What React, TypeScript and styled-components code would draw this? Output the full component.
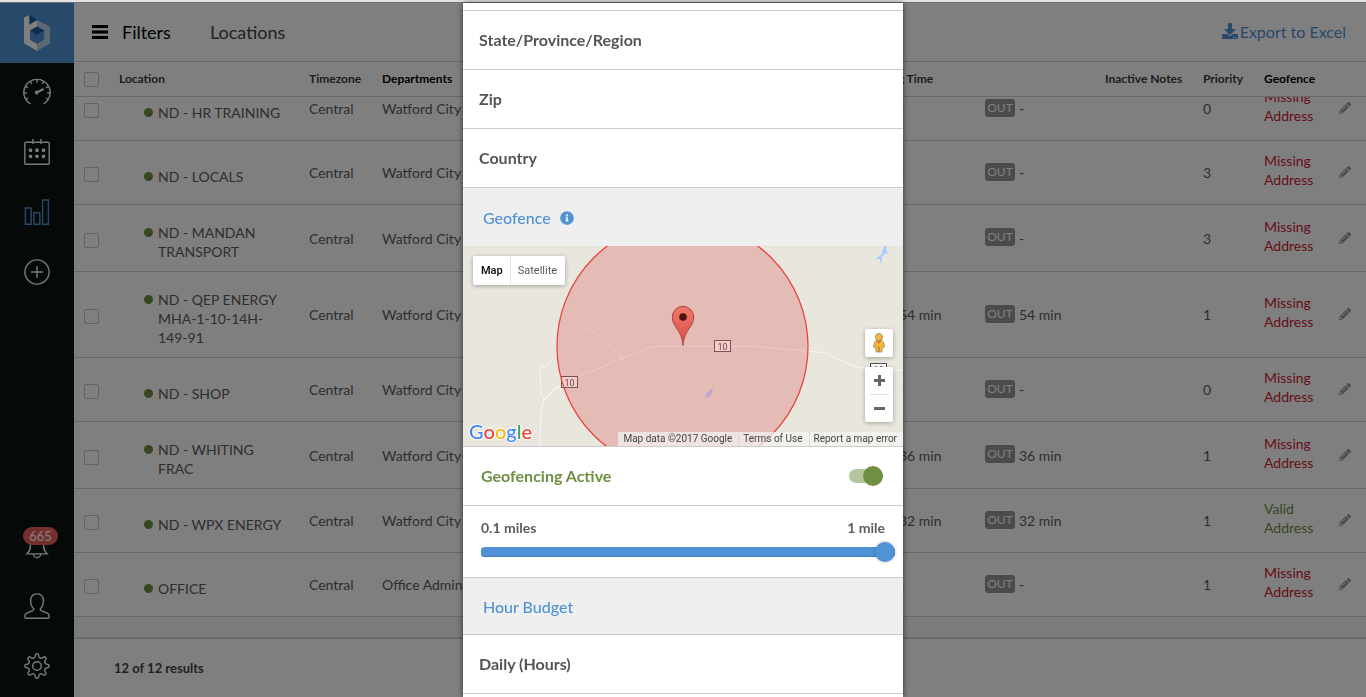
import React, { useLayoutEffect, useRef, useState } from 'react';
import styled, { createGlobalStyle } from 'styled-components';
import { FaDownload, FaInfoCircle, FaPencilAlt } from 'react-icons/fa';

const GlobalStyle = createGlobalStyle`
  *, *::before, *::after { box-sizing: border-box; }
  body { margin: 0; background: #fff; font-family: Lato, "Liberation Sans", sans-serif; color: #5c5c5c; }
  button, input { font: inherit; color: inherit; }
  button { padding: 0; border: 0; background: none; cursor: pointer; }
  a { text-decoration: none; }
`;

/* ---------- shell ---------- */

const Shell = styled.div`
  display: flex;
  flex-direction: column;
  height: 100vh;
  overflow: hidden;
`;

const TopStrip = styled.div`
  flex: none;
  height: 3px;
  background: #e2e2e4;
  border-bottom: 1px solid #737373;
`;

const Workspace = styled.div`
  flex: 1;
  min-height: 0;
  display: flex;
`;

const Sidebar = styled.nav`
  flex: none;
  width: 74px;
  display: flex;
  flex-direction: column;
  background: #0a1512;
`;

const LogoLink = styled.a`
  display: flex;
  justify-content: center;
  align-items: center;
  height: 60px;
  background: #4f92d5;
`;

const NavButton = styled.button<{ $active?: boolean }>`
  display: flex;
  justify-content: center;
  align-items: flex-start;
  height: 60px;
  padding-top: 16px;
  position: relative;
  color: ${p => (p.$active ? '#4f92d5' : '#f4f4f4')};
  svg { fill: none; stroke: currentColor; stroke-width: 1.4; }
`;

const NavSpacer = styled.div`
  flex: 1;
`;

const CountBadge = styled.span`
  position: absolute;
  top: 10px;
  left: 23px;
  width: 35px;
  height: 18px;
  border-radius: 9px;
  background: #ea605c;
  color: #fff;
  font-size: 13px;
  line-height: 18px;
  text-align: center;
`;

const Main = styled.main`
  flex: 1;
  min-width: 0;
  display: flex;
  flex-direction: column;
`;

const PageHeader = styled.header`
  flex: none;
  display: flex;
  align-items: center;
  height: 59px;
  padding: 0 20px 0 18px;
  border-bottom: 1px solid #d0d0d0;
  font-size: 18px;
`;

const FilterButton = styled.button`
  display: flex;
  align-items: center;
  gap: 14px;
  color: #000;
  margin-right: 39px;
`;

const PageTitle = styled.h1`
  flex: 1;
  margin: 0;
  font-size: 18px;
  font-weight: 400;
  color: #444;
`;

const ExportLink = styled.a`
  display: flex;
  align-items: center;
  gap: 2px;
  padding-bottom: 2px;
  font-size: 16px;
  color: #4f92d5;
`;

/* ---------- table ---------- */

const TableScroller = styled.div`
  flex: 1;
  min-height: 0;
  overflow-y: auto;
  scrollbar-width: none;
  background: #f6f6f6;
  padding-bottom: 20px;
`;

const Table = styled.table`
  width: 100%;
  table-layout: fixed;
  border-collapse: separate;
  border-spacing: 0;
  background: #fff;
  font-size: 14px;
  line-height: 19px;
`;

const Col = styled.col<{ $w?: number }>`
  width: ${p => (p.$w ? `${p.$w}px` : 'auto')};
`;

const HeadCell = styled.th<{ $strong?: boolean; $check?: boolean }>`
  position: sticky;
  top: 0;
  z-index: 1;
  height: 35px;
  padding: ${p => (p.$check ? '0 0 0 10px' : '0 0 2px')};
  background: #fff;
  border-bottom: 1px solid #d0d0d0;
  text-align: left;
  white-space: nowrap;
  font-size: 12px;
  font-weight: 700;
  color: ${p => (p.$strong ? '#000' : '#3a3a3a')};
`;

const Cell = styled.td`
  padding: 0;
  border-bottom: 1px solid #d0d0d0;
  white-space: nowrap;
`;

const CheckCell = styled(Cell)`
  padding: 4px 0 0 10px;
`;

const LocationCell = styled(Cell)`
  padding: 18px 25px 10px 25px;
  white-space: normal;
`;

const TimeCell = styled(Cell)`
  padding-left: 34px;
`;

const GeofenceCell = styled(Cell)<{ $valid: boolean }>`
  padding: 10px 15px 15px 0;
  white-space: normal;
  color: ${p => (p.$valid ? '#6f8f42' : '#cc2233')};
`;

const LocationName = styled.div`
  display: flex;
  align-items: flex-start;
  gap: 5px;
`;

const StatusDot = styled.span`
  flex: none;
  width: 9px;
  height: 9px;
  margin-top: 5px;
  border-radius: 50%;
  background: #6f8f42;
`;

const Checkbox = styled.input`
  appearance: none;
  display: block;
  width: 15px;
  height: 15px;
  margin: 0;
  border: 1px solid #c4c4c4;
  border-radius: 2px;
  background: transparent;
`;

const Timing = styled.div`
  display: flex;
  align-items: center;
  gap: 4px;
`;

const Tag = styled.span`
  width: 30px;
  height: 18px;
  margin-bottom: 2px;
  border-radius: 3px;
  background: #969696;
  color: #fff;
  font-size: 12px;
  line-height: 18px;
  text-align: center;
`;

const EditButton = styled.button`
  display: block;
  color: #999;
`;

const ResultsBar = styled.footer`
  flex: none;
  display: flex;
  align-items: center;
  height: 60px;
  padding-left: 40px;
  border-top: 2px solid #d8d8d8;
  background: #fff;
  font-size: 13px;
  font-weight: 700;
  color: #444;
`;

/* ---------- dialog ---------- */

const Backdrop = styled.div`
  position: fixed;
  inset: 3px 0 0;
  z-index: 10;
  display: flex;
  justify-content: center;
  background: rgba(0, 0, 0, 0.5);
`;

const Dialog = styled.form`
  width: 440px;
  padding-top: 7px;
  overflow: hidden;
  background: #fff;
  box-shadow: 0 0 6px rgba(0, 0, 0, 0.6);
`;

const Fields = styled.div`
  border-top: 1px solid #ccc;
`;

const Field = styled.div`
  display: flex;
  align-items: center;
  gap: 16px;
  height: 59px;
  padding: 0 16px 2px;
  border-bottom: 1px solid #ccc;
  font-size: 16px;
  font-weight: 700;
  color: #555;
`;

const FieldInput = styled.input`
  flex: 1;
  min-width: 0;
  border: 0;
  outline: 0;
  background: transparent;
`;

const SectionTitle = styled.h2<{ $ruled?: boolean }>`
  display: flex;
  align-items: center;
  gap: 9px;
  height: ${p => (p.$ruled ? 57 : 58)}px;
  margin: 0;
  padding: 0 20px;
  border-bottom: ${p => (p.$ruled ? '1px solid #ccc' : '0')};
  background: #efefef;
  color: #4f92d5;
  font-size: 16px;
  font-weight: 500;
  svg { margin-top: 2px; }
`;

const ToggleRow = styled(Field)`
  justify-content: space-between;
  padding: 0 20px 0 18px;
  color: #6f8f42;
  label { padding-bottom: 2px; }
`;

const Toggle = styled.input`
  appearance: none;
  display: flex;
  align-items: center;
  width: 34px;
  height: 14px;
  margin: 0;
  border-radius: 7px;
  background: #b5c69c;
  &::before {
    content: '';
    width: 20px;
    height: 20px;
    border-radius: 50%;
    background: #8f8f8f;
  }
  &:checked::before {
    margin-left: auto;
    background: #6f8f42;
  }
`;

const RadiusRow = styled.div`
  height: 72px;
  padding: 13px 8px 0 18px;
  border-bottom: 1px solid #ccc;
  font-size: 14px;
  line-height: 18px;
  font-weight: 700;
`;

const RadiusLabels = styled.div`
  display: flex;
  justify-content: space-between;
  padding-right: 10px;
`;

const RadiusSlider = styled.input`
  appearance: none;
  display: block;
  width: 100%;
  height: 20px;
  margin: 5px 0 0;
  background: transparent;
  &::-webkit-slider-runnable-track {
    height: 10px;
    border-radius: 4px;
    background: #4f92d5;
    box-shadow: inset 0 -1px 0 #3d7ab8;
  }
  &::-webkit-slider-thumb {
    appearance: none;
    width: 20px;
    height: 20px;
    margin-top: -5px;
    border-radius: 50%;
    background: #4f92d5;
    box-shadow: 0 0 3px rgba(0, 0, 0, 0.3);
  }
`;

/* ---------- map ---------- */

const MapFrame = styled.div`
  position: relative;
  height: 201px;
  border-bottom: 1px solid #ccc;
  background: #e8e6dd;
  font-family: Roboto, "Liberation Sans", sans-serif;
  overflow: hidden;
`;

const MapDrawing = styled.svg`
  display: block;
  width: 100%;
  height: 200px;
`;

const MapTypes = styled.div`
  position: absolute;
  top: 10px;
  left: 10px;
  display: flex;
  height: 29px;
  border-radius: 2px;
  background: #fff;
  box-shadow: 0 1px 4px rgba(0, 0, 0, 0.3);
  font-size: 11px;
`;

const MapType = styled.button<{ $on?: boolean }>`
  padding: 0 ${p => (p.$on ? 7 : 8)}px 0 ${p => (p.$on ? 8 : 7)}px;
  color: ${p => (p.$on ? '#000' : '#565656')};
  font-weight: ${p => (p.$on ? 500 : 400)};
  & + & { border-left: 1px solid #e6e6e6; }
`;

const MapTools = styled.div`
  position: absolute;
  right: 10px;
  bottom: 24px;
  display: flex;
  flex-direction: column;
  gap: 10px;
`;

const ToolBox = styled.div`
  display: flex;
  flex-direction: column;
  align-items: center;
  width: 28px;
  border-radius: 2px;
  background: #fff;
  box-shadow: 0 1px 4px rgba(0, 0, 0, 0.3);
`;

const ToolButton = styled.button<{ $zoom?: boolean }>`
  display: flex;
  justify-content: center;
  align-items: center;
  width: 19px;
  height: ${p => (p.$zoom ? 27 : 28)}px;
  & + & { height: 28px; border-top: 1px solid #e0e0e0; }
`;

const GoogleMark = styled.a`
  position: absolute;
  left: 6px;
  bottom: 3px;
  font-family: Lato, sans-serif;
  font-size: 20px;
  line-height: 24px;
  font-weight: 500;
  text-shadow: 1px 0 1px #fff, -1px 0 1px #fff, 0 1px 1px #fff, 0 -1px 1px #fff;
`;

const Letter = styled.span<{ $c: string }>`
  color: ${p => p.$c};
`;

const Attribution = styled.div`
  position: absolute;
  right: 0;
  bottom: 0;
  display: flex;
  height: 14px;
  background: rgba(245, 245, 245, 0.7);
  font-size: 10px;
  line-height: 14px;
  color: #444;
`;

const Credit = styled.span`
  padding: 0 6px 0 5px;
  & + & { padding-left: 4px; border-left: 1px solid rgba(220, 210, 205, 0.8); }
  a { color: inherit; }
`;

/* ---------- drawings ---------- */

const Logo = () => (
  <svg width="26" height="36" viewBox="0 0 26 36" aria-hidden="true">
    <path d="M0 2.6 5.3 0v8.8L13 5v7.2L6 15.4v9.4l7 4.2v7L0 28.2Z" fill="#fff" />
    <path d="M13 5 26 11.6v16.8L13 36v-7l7.2-4.2v-9.4L13 11.6Z" fill="#b9d0e2" />
    <path d="M5.3 0 13.4 4.8 5.8 9.6Z" fill="#1c5a96" />
    <path d="M6 15.4 13 11.4l7.2 4L13 20Z" fill="#1c5a96" />
  </svg>
);

const GaugeIcon = () => (
  <svg width="28" height="26" viewBox="0 0 28 26" aria-hidden="true">
    <path d="M7.6 25A13.2 13.2 0 1 1 20.4 25" />
    <path d="M14 .8v3M7.4 2.6l1.400 2.400M20.600 2.600 19.200 5M2.600 7.400 5 8.800M25.400 7.400 23 8.800M.8 14h3M27.200 14h-3M2.800 20.400l2.200-1.200M25.200 20.400 23 19.200" />
    <path d="M14 13.400 20.600 10" strokeWidth="2" />
    <circle cx="13.800" cy="13.600" r="1.300" fill="currentColor" />
  </svg>
);

const CalendarIcon = () => (
  <svg width="26" height="26" viewBox="0 0 26 26" aria-hidden="true">
    <rect x=".8" y="3.2" width="24.4" height="22" rx="1" />
    <path d="M9 0v5M17 0v5" />
    <g fill="currentColor" stroke="none">
      {[6.5, 13, 19.5].map(x =>
        [11.2, 17.4].map(y => <rect key={`${x}-${y}`} x={x - 1.7} y={y - 1.7} width="3.4" height="3.4" rx="1" />),
      )}
    </g>
  </svg>
);

const BarsIcon = () => (
  <svg width="26" height="26" viewBox="0 0 26 26" aria-hidden="true">
    <path d="M1.4 9h5.8v16.2H1.4ZM10 13.8h5.8v11.4H10ZM18.6 1h5.8v24.2h-5.8Z" />
  </svg>
);

const PlusIcon = () => (
  <svg width="26" height="26" viewBox="0 0 26 26" aria-hidden="true">
    <circle cx="13" cy="13" r="12.1" />
    <path d="M13 7v12M7 13h12" />
  </svg>
);

const BellIcon = () => (
  <svg width="26" height="26" viewBox="0 0 26 26" aria-hidden="true">
    <path d="M13 1.500c-4 0-6.600 3-6.600 7v5c0 3.200-1.200 5-3.600 7.400h20.400c-2.400-2.400-3.600-4.200-3.600-7.400v-5c0-4-2.600-7-6.600-7Z" />
    <path d="M9.400 21a3.600 3.600 0 0 0 7.200 0" />
  </svg>
);

const UserIcon = () => (
  <svg width="26" height="26" viewBox="0 0 26 26" aria-hidden="true">
    <path d="M13 .9c-4 0-6.400 2.800-6.400 6.900 0 3.400 1 6 2.800 7.600.6.8.4 1.800-.6 2.200L2.600 20.200C1.200 20.800.8 22 .8 23.400c0 1.200.4 1.800 1.400 1.800h21.600c1 0 1.400-.6 1.400-1.800 0-1.400-.4-2.600-1.800-3.200l-6.200-2.600c-1-.4-1.200-1.400-.6-2.200 1.800-1.600 2.800-4.200 2.800-7.600C19.400 3.700 17 .9 13 .9Z" />
  </svg>
);

/* Eight rounded teeth around a ring, traced as a smooth closed curve. */
const gearPath = (() => {
  const at = (a: number, r: number) => `${(13 + r * Math.cos(a)).toFixed(2)} ${(13 + r * Math.sin(a)).toFixed(2)}`;
  const parts: string[] = [];
  for (let i = 0; i < 8; i++) {
    const a = (i * Math.PI) / 4 - Math.PI / 2;
    parts.push(`${i === 0 ? 'M' : 'L'}${at(a - 0.19, 9.6)}`);
    parts.push(`L${at(a - 0.13, 11.6)}Q${at(a, 12.8)} ${at(a + 0.13, 11.6)}`);
    parts.push(`L${at(a + 0.19, 9.6)}Q${at(a + Math.PI / 8, 7.6)} ${at(a + Math.PI / 4 - 0.19, 9.6)}`);
  }
  return `${parts.join('')}Z`;
})();

const GearIcon = () => (
  <svg width="26" height="26" viewBox="0 0 26 26" strokeLinejoin="round" aria-hidden="true">
    <path d={gearPath} />
    <circle cx="13" cy="13" r="4.3" />
  </svg>
);

const MenuIcon = () => (
  <svg width="16" height="14" viewBox="0 0 16 14" aria-hidden="true">
    <path d="M0 0h16v3H0ZM0 5.500h16v3H0ZM0 11h16v3H0Z" fill="#000" />
  </svg>
);

const Pegman = () => (
  <svg width="14" height="20" viewBox="0 0 14 20" aria-hidden="true">
    <path d="M4 7.500h6l1.800 2.500.7 4-2 .4L9.800 19H4.200l-.7-4.600-2-.4L2.200 10Z" fill="#f3b73b" stroke="#9b8a66" strokeWidth=".8" />
    <circle cx="7" cy="4" r="3.600" fill="#f3b73b" stroke="#9b8a66" strokeWidth=".8" />
    <path d="M4.800 8h4.400L7 11Z" fill="#e0752d" />
    <path d="M7 13.500V19" stroke="#9b7a33" />
  </svg>
);

const Shield = ({ x, y }: { x: number; y: number }) => (
  <g>
    <rect x={x + 0.5} y={y + 0.5} width="16" height="11" fill="#fff" stroke="#555" />
    <text x={x + 8.5} y={y + 9.5} fontSize="9" fill="#444" textAnchor="middle">10</text>
  </g>
);

const MapArt = () => (
  <MapDrawing viewBox="0 0 440 200" preserveAspectRatio="xMidYMid slice" role="img" aria-label="Geofence area">
    <path d="M421 0h3l-.5 4 1.500 3-4.500 1.500-1.500 3-.5 6-1.500-1.500 0-3-4.500-.5 6-4Z" fill="#aaccff" />
    <path d="M243 151.500v-4l7-5.500-1.500 6-4 4Z" fill="#aaccff" />
    <g fill="none" stroke="#f6f5f0" strokeWidth="1.200">
      <path d="M77 200 78 164 81 154 93 142 115 131 158 113 185 102 197 100H287L343 105 363 107 379 115 393 121 407 123 440 124" />
      <path d="M81 154 78 147 77 122 85 119 88 114" strokeWidth="1" />
      <path d="M158 113 157 107 142 97 139 93 126 83 123 84 122 82" strokeWidth="1" />
    </g>
    <Shield x={98} y={130} />
    <Shield x={251} y={94} />
    <Shield x={407} y={117} />
    <circle cx="219.500" cy="100.500" r="125.500" fill="rgba(221,75,75,.27)" stroke="#e8463f" strokeWidth="1.300" />
    <defs>
      <linearGradient id="pin" x1="0" y1="0" x2="0" y2="1">
        <stop offset="0" stopColor="#ee7a70" />
        <stop offset="1" stopColor="#dd4b3e" />
      </linearGradient>
    </defs>
    <path d="M220 99.500c-.8-8.500-3.200-12.500-6.500-17.500-2.300-3.500-4.200-6.500-4.200-11a10.700 10.700 0 0 1 21.400 0c0 4.500-1.900 7.500-4.200 11-3.300 5-5.700 9-6.500 17.500Z" fill="url(#pin)" stroke="#a8453c" />
    <circle cx="220" cy="71" r="3.800" fill="#4d1512" />
  </MapDrawing>
);

/* ---------- data ---------- */

interface LocationRow {
  name: string;
  dept: string;
  time: string;
  priority: number;
  valid?: boolean;
}

const rows: LocationRow[] = [
  { name: 'ND - HR TRAINING', dept: 'Watford City', time: '-', priority: 0 },
  { name: 'ND - LOCALS', dept: 'Watford City', time: '-', priority: 3 },
  { name: 'ND - MANDAN TRANSPORT', dept: 'Watford City', time: '-', priority: 3 },
  { name: 'ND - QEP ENERGY MHA-1-10-14H-149-91', dept: 'Watford City', time: '54 min', priority: 1 },
  { name: 'ND - SHOP', dept: 'Watford City', time: '-', priority: 0 },
  { name: 'ND - WHITING FRAC', dept: 'Watford City', time: '36 min', priority: 1 },
  { name: 'ND - WPX ENERGY', dept: 'Watford City', time: '32 min', priority: 1, valid: true },
  { name: 'OFFICE', dept: 'Office Admin', time: '-', priority: 1 },
];

const google: [string, string][] = [
  ['G', '#4285f4'], ['o', '#ea4335'], ['o', '#f5b70a'], ['g', '#4285f4'], ['l', '#34a853'], ['e', '#ea4335'],
];

/* ---------- views ---------- */

const LocationsTable = () => {
  const scroller = useRef<HTMLDivElement>(null);
  useLayoutEffect(() => {
    if (scroller.current) scroller.current.scrollTop = scroller.current.scrollHeight;
  }, []);
  return (
    <TableScroller ref={scroller}>
      <Table>
        <colgroup>
          <Col $w={45} /><Col $w={190} /><Col $w={73} /><Col /><Col $w={120} />
          <Col $w={120} /><Col $w={98} /><Col $w={61} /><Col $w={75} /><Col $w={27} />
        </colgroup>
        <thead>
          <tr>
            <HeadCell $check><Checkbox type="checkbox" aria-label="Select all" /></HeadCell>
            <HeadCell>Location</HeadCell>
            <HeadCell>Timezone</HeadCell>
            <HeadCell $strong>Departments</HeadCell>
            <HeadCell>Driving Time</HeadCell>
            <HeadCell />
            <HeadCell>Inactive Notes</HeadCell>
            <HeadCell>Priority</HeadCell>
            <HeadCell $strong>Geofence</HeadCell>
            <HeadCell />
          </tr>
        </thead>
        <tbody>
          {rows.map(r => (
            <tr key={r.name}>
              <CheckCell><Checkbox type="checkbox" aria-label={`Select ${r.name}`} /></CheckCell>
              <LocationCell><LocationName><StatusDot /><span>{r.name}</span></LocationName></LocationCell>
              <Cell>Central</Cell>
              <Cell>{r.dept}</Cell>
              <TimeCell>{r.time}</TimeCell>
              <Cell><Timing><Tag>OUT</Tag>{r.time}</Timing></Cell>
              <Cell />
              <Cell>{r.priority}</Cell>
              <GeofenceCell $valid={!!r.valid}>{r.valid ? 'Valid' : 'Missing'} Address</GeofenceCell>
              <Cell><EditButton aria-label={`Edit ${r.name}`}><FaPencilAlt size={12} /></EditButton></Cell>
            </tr>
          ))}
        </tbody>
      </Table>
    </TableScroller>
  );
};

const GeofenceMap = () => (
  <MapFrame>
    <MapArt />
    <MapTypes>
      <MapType type="button" $on>Map</MapType>
      <MapType type="button">Satellite</MapType>
    </MapTypes>
    <MapTools>
      <ToolBox><ToolButton type="button" aria-label="Street view"><Pegman /></ToolButton></ToolBox>
      <ToolBox>
        <ToolButton type="button" $zoom aria-label="Zoom in">
          <svg width="11" height="11" viewBox="0 0 11 11"><path d="M5.500 0v11M0 5.500h11" stroke="#666" strokeWidth="3" /></svg>
        </ToolButton>
        <ToolButton type="button" $zoom aria-label="Zoom out">
          <svg width="11" height="11" viewBox="0 0 11 11"><path d="M0 5.500h11" stroke="#666" strokeWidth="3" /></svg>
        </ToolButton>
      </ToolBox>
    </MapTools>
    <GoogleMark href="#google">
      {google.map(([ch, c], i) => <Letter key={i} $c={c}>{ch}</Letter>)}
    </GoogleMark>
    <Attribution>
      <Credit>Map data ©2017 Google</Credit>
      <Credit><a href="#terms">Terms of Use</a></Credit>
      <Credit><a href="#report">Report a map error</a></Credit>
    </Attribution>
  </MapFrame>
);

const LocationDialog = () => {
  const [active, setActive] = useState(true);
  const [radius, setRadius] = useState(1);
  return (
    <Backdrop>
      <Dialog role="dialog" aria-label="Edit location">
        <Fields>
          <Field><label htmlFor="state">State/Province/Region</label><FieldInput id="state" /></Field>
          <Field><label htmlFor="zip">Zip</label><FieldInput id="zip" /></Field>
          <Field><label htmlFor="country">Country</label><FieldInput id="country" /></Field>
        </Fields>
        <SectionTitle>Geofence <FaInfoCircle size={14} /></SectionTitle>
        <GeofenceMap />
        <ToggleRow>
          <label htmlFor="active">Geofencing Active</label>
          <Toggle id="active" type="checkbox" checked={active} onChange={e => setActive(e.target.checked)} />
        </ToggleRow>
        <RadiusRow>
          <RadiusLabels><label htmlFor="radius">0.1 miles</label><span>1 mile</span></RadiusLabels>
          <RadiusSlider
            id="radius" type="range" min={0.1} max={1} step={0.1}
            value={radius} onChange={e => setRadius(Number(e.target.value))}
          />
        </RadiusRow>
        <SectionTitle $ruled>Hour Budget</SectionTitle>
        <Field><label htmlFor="daily">Daily (Hours)</label><FieldInput id="daily" /></Field>
      </Dialog>
    </Backdrop>
  );
};

export default function App() {
  return (
    <Shell>
      <GlobalStyle />
      <TopStrip />
      <Workspace>
        <Sidebar>
          <LogoLink href="#home" aria-label="Home"><Logo /></LogoLink>
          <NavButton aria-label="Dashboard"><GaugeIcon /></NavButton>
          <NavButton aria-label="Schedule"><CalendarIcon /></NavButton>
          <NavButton aria-label="Reports" $active><BarsIcon /></NavButton>
          <NavButton aria-label="Add"><PlusIcon /></NavButton>
          <NavSpacer />
          <NavButton aria-label="Notifications"><BellIcon /><CountBadge>665</CountBadge></NavButton>
          <NavButton aria-label="Profile"><UserIcon /></NavButton>
          <NavButton aria-label="Settings"><GearIcon /></NavButton>
        </Sidebar>
        <Main>
          <PageHeader>
            <FilterButton><MenuIcon />Filters</FilterButton>
            <PageTitle>Locations</PageTitle>
            <ExportLink href="#export"><FaDownload size={16} />Export to Excel</ExportLink>
          </PageHeader>
          <LocationsTable />
          <ResultsBar>12 of 12 results</ResultsBar>
        </Main>
      </Workspace>
      <LocationDialog />
    </Shell>
  );
}
